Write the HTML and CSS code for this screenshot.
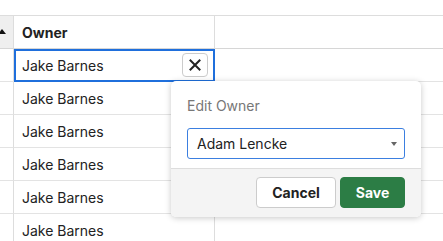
FILE: index.html
```html
<!DOCTYPE html>
<html lang="en">
<head>
    <meta charset="UTF-8">
    <meta name="viewport" content="width=device-width, initial-scale=1.0">
    <title>Edit Owner</title>
    <link rel="stylesheet" href="styles.css">
</head>
<body>
    <div class="grid">
        <div class="cell head row-head"><span class="sort-arrow"></span></div>
        <div class="cell head">Owner</div>
        <div class="cell head"></div>

        <div class="cell"></div>
        <div class="cell selected">
            Jake Barnes
            <button class="clear-btn" aria-label="Clear">
                <svg width="12" height="12" viewBox="0 0 12 12">
                    <path d="M1.5 1.5 L10.5 10.5 M10.5 1.5 L1.5 10.5" stroke="#222" stroke-width="2" stroke-linecap="square"/>
                </svg>
            </button>
        </div>
        <div class="cell"></div>

        <div class="cell"></div>
        <div class="cell">Jake Barnes</div>
        <div class="cell"></div>

        <div class="cell"></div>
        <div class="cell">Jake Barnes</div>
        <div class="cell"></div>

        <div class="cell"></div>
        <div class="cell">Jake Barnes</div>
        <div class="cell"></div>

        <div class="cell"></div>
        <div class="cell">Jake Barnes</div>
        <div class="cell"></div>

        <div class="cell"></div>
        <div class="cell">Jake Barnes</div>
        <div class="cell"></div>
    </div>

    <div class="popup">
        <div class="popup-body">
            <div class="popup-label">Edit Owner</div>
            <div class="select">
                <span>Adam Lencke</span>
                <span class="caret"></span>
            </div>
        </div>
        <div class="popup-footer">
            <button class="btn btn-cancel">Cancel</button>
            <button class="btn btn-save">Save</button>
        </div>
    </div>
</body>
</html>
```

FILE: styles.css
```css
body {
    margin: 0;
    padding: 0;
    font-family: Inter, "Noto Sans", sans-serif;
    font-size: 14px;
    color: #222;
    background-color: #fff;
    overflow: hidden;
}

.grid {
    margin-top: 15px;
    border-top: 1px solid #ddd;
    display: grid;
    grid-template-columns: 14px 201px 1fr;
    grid-auto-rows: 33px;
}

.cell {
    position: relative;
    display: flex;
    align-items: center;
    padding-left: 8px;
    border-right: 1px solid #ddd;
    border-bottom: 1px solid #e3e3e3;
    box-sizing: border-box;
    white-space: nowrap;
}

.cell:nth-child(3n+1) {
    padding-left: 0;
}

.cell:nth-child(3n) {
    border-right: none;
}

.head {
    font-weight: 700;
    border-bottom-color: #d6d6d6;
}

.row-head {
    background-color: #efefef;
    overflow: hidden;
}

.sort-arrow {
    position: absolute;
    left: -2px;
    top: 13px;
    border-left: 4px solid transparent;
    border-right: 4px solid transparent;
    border-bottom: 5px solid #111;
}

.selected::after {
    content: "";
    position: absolute;
    left: 0;
    top: 0;
    right: -1px;
    bottom: -1px;
    border: 2px solid #1f6fdc;
    pointer-events: none;
}

.clear-btn {
    position: absolute;
    left: 168px;
    top: 4px;
    width: 26px;
    height: 24px;
    padding: 0;
    display: flex;
    align-items: center;
    justify-content: center;
    background-color: #fff;
    border: 1px solid #ccc;
    border-radius: 4px;
}

.popup {
    position: absolute;
    left: 171px;
    top: 81px;
    width: 250px;
    background-color: #fff;
    border-radius: 5px;
    box-shadow: 0 1px 6px rgba(0, 0, 0, 0.22);
    overflow: hidden;
}

.popup-body {
    padding: 16px 16px 9px;
}

.popup-label {
    color: #777;
    line-height: 17px;
    margin-bottom: 14px;
}

.select {
    height: 31px;
    box-sizing: border-box;
    border: 1px solid #3b7fe0;
    border-radius: 3px;
    display: flex;
    align-items: center;
    justify-content: space-between;
    padding: 0 7px 0 9px;
    color: #222;
}

.caret {
    border-left: 3.5px solid transparent;
    border-right: 3.5px solid transparent;
    border-top: 4px solid #666;
}

.popup-footer {
    border-top: 1px solid #ddd;
    background-color: #f4f4f4;
    padding: 8px 16px 9px;
    display: flex;
    justify-content: flex-end;
    gap: 4px;
}

.btn {
    height: 31px;
    border-radius: 4px;
    font-family: Inter, "Noto Sans", sans-serif;
    font-size: 14px;
    font-weight: 700;
    cursor: pointer;
}

.btn-cancel {
    width: 80px;
    background-color: #fff;
    border: 1px solid #ccc;
    color: #222;
}

.btn-save {
    width: 65px;
    background-color: #2c7d45;
    border: 1px solid #2c7d45;
    color: #fff;
}
```
